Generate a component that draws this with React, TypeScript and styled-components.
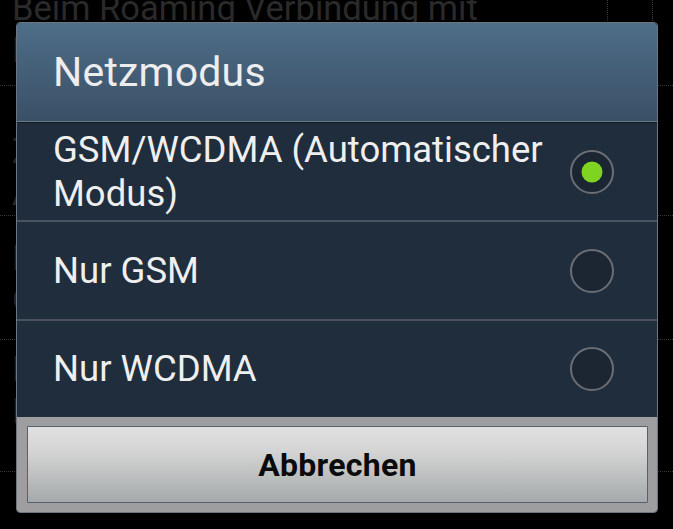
import React from "react";
import styled, { createGlobalStyle } from "styled-components";

const GlobalStyle = createGlobalStyle`
  html, body {
    margin: 0;
    padding: 0;
    background: #000;
  }
  body {
    font-family: Roboto, "Noto Sans", "Liberation Sans", sans-serif;
  }
`;

const Screen = styled.div`
  position: relative;
  width: 673px;
  height: 529px;
  overflow: hidden;
  background: #000;
`;

/* ---------- background settings list (dimmed) ---------- */

const SettingsList = styled.div`
  display: flex;
  flex-direction: column;
  margin-top: -15px;
`;

const SettingsItem = styled.div<{ $h: number }>`
  display: flex;
  align-items: flex-start;
  height: ${(p) => p.$h}px;
  border-bottom: 1px dotted #383838;
  padding-left: 12px;
  box-sizing: border-box;
`;

const SettingsText = styled.div<{ $pt: number }>`
  flex: 1;
  padding-top: ${(p) => p.$pt}px;
  display: flex;
  flex-direction: column;
`;

const SettingsLine = styled.div`
  font-size: 34.5px;
  line-height: 42px;
  color: #2a2a2a;
  white-space: nowrap;
`;

const CheckFrame = styled.div`
  width: 44px;
  height: 70px;
  margin-right: 20px;
  border-left: 1px dotted #3a3a3a;
  border-right: 1px dotted #3a3a3a;
`;

/* ---------- dialog ---------- */

const Dialog = styled.div`
  position: absolute;
  left: 16px;
  top: 22px;
  width: 642px;
  box-sizing: border-box;
  border: 1px solid #6c7580;
  border-radius: 4px;
  overflow: hidden;
  display: flex;
  flex-direction: column;
  box-shadow: 0 0 2px rgba(0, 0, 0, 0.6);
`;

const Header = styled.div`
  height: 98px;
  display: flex;
  align-items: center;
  padding-left: 36px;
  background: linear-gradient(#4f6e88 0%, #456079 45%, #3a5067 100%);
  border-bottom: 1px solid #687b8d;
  box-shadow: 0 1px 0 #121a22;
  margin-bottom: 1px;
`;

const Title = styled.h1`
  margin: 0;
  font-size: 41px;
  font-weight: 400;
  color: #ededed;
  letter-spacing: 0.2px;
`;

const OptionList = styled.div`
  display: flex;
  flex-direction: column;
  background: #1f2d3c;
`;

const OptionRow = styled.div<{ $h: number; $sep: boolean }>`
  display: flex;
  align-items: center;
  height: ${(p) => p.$h}px;
  box-sizing: border-box;
  padding: 0 43px 0 36px;
  border-top: ${(p) => (p.$sep ? "2px solid #48535e" : "none")};
`;

const OptionLabel = styled.div`
  flex: 1;
  font-size: 36.5px;
  line-height: 44px;
  color: #efefef;
  padding-right: 20px;
`;

const Footer = styled.div`
  background: #9e9da0;
  padding: 9px 9px 9px 10px;
`;

const CancelButton = styled.button`
  width: 100%;
  height: 77px;
  display: flex;
  align-items: center;
  justify-content: center;
  border: 1px solid #536270;
  border-radius: 1px;
  background: linear-gradient(
    #e0e0e0 0%,
    #d5d5d5 30%,
    #c4c6c6 55%,
    #b3b6b6 80%,
    #a6a9a9 100%
  );
  font-family: Roboto, "Liberation Sans", sans-serif;
  font-size: 32px;
  font-weight: 700;
  color: #0b0b0b;
  padding: 0;
  letter-spacing: 0.3px;
`;

function Radio({ checked }: { checked: boolean }) {
  return (
    <svg width="44" height="44" viewBox="0 0 44 44">
      <circle cx="22" cy="22" r="21" fill="#1b2632" stroke="#6b6f75" strokeWidth="2" />
      {checked && <circle cx="22" cy="22" r="10.5" fill="#7ed420" />}
    </svg>
  );
}

const options = [
  { label: "GSM/WCDMA (Automatischer Modus)", h: 97, checked: true },
  { label: "Nur GSM", h: 99, checked: false },
  { label: "Nur WCDMA", h: 98, checked: false },
];

const bgItems = [
  { lines: ["Beim Roaming Verbindung mit", "Datendiensten herstellen"], h: 101, pt: 2, check: true },
  { lines: ["Zugangspunkte", "APN-Einstellungen"], h: 130, pt: 44, check: false },
  { lines: ["Netzmodus", "GSM/WCDMA (Automatischer Modus)"], h: 124, pt: 21, check: false },
  { lines: ["Netzbetreiber", "Netzwerk auswählen"], h: 132, pt: 8, check: false },
];

export default function App() {
  return (
    <>
      <GlobalStyle />
      <Screen>
        <SettingsList>
          {bgItems.map((it, i) => (
            <SettingsItem key={i} $h={it.h}>
              <SettingsText $pt={it.pt}>
                {it.lines.map((l, j) => (
                  <SettingsLine key={j}>{l}</SettingsLine>
                ))}
              </SettingsText>
              {it.check && <CheckFrame />}
            </SettingsItem>
          ))}
        </SettingsList>

        <Dialog>
          <Header>
            <Title>Netzmodus</Title>
          </Header>
          <OptionList>
            {options.map((o, i) => (
              <OptionRow key={o.label} $h={o.h} $sep={i > 0}>
                <OptionLabel>{o.label}</OptionLabel>
                <Radio checked={o.checked} />
              </OptionRow>
            ))}
          </OptionList>
          <Footer>
            <CancelButton>Abbrechen</CancelButton>
          </Footer>
        </Dialog>
      </Screen>
    </>
  );
}
